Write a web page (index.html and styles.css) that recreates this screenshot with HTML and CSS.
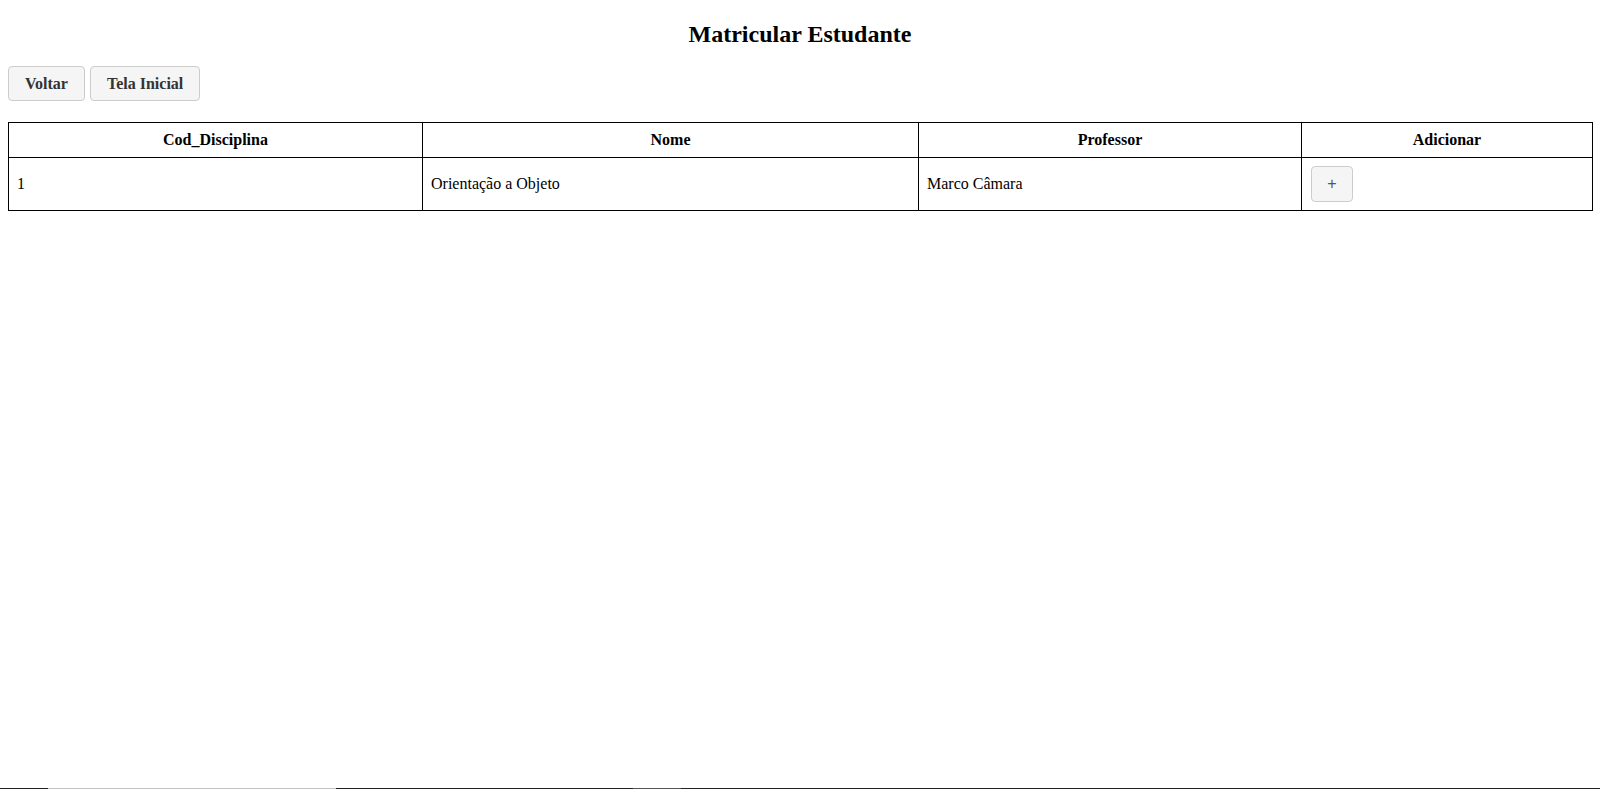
FILE: index.html
```html
<!DOCTYPE html>
<html lang="pt-BR">
<head>
<meta charset="utf-8">
<title>Matricular Estudante</title>
<link rel="stylesheet" href="styles.css">
</head>
<body>
  <h2 class="title">Matricular Estudante</h2>
  <div class="actions">
    <button class="btn">Voltar</button>
    <button class="btn">Tela Inicial</button>
  </div>
  <table class="grid">
    <colgroup>
      <col class="c1"><col class="c2"><col class="c3"><col class="c4">
    </colgroup>
    <thead>
      <tr>
        <th>Cod_Disciplina</th>
        <th>Nome</th>
        <th>Professor</th>
        <th>Adicionar</th>
      </tr>
    </thead>
    <tbody>
      <tr>
        <td>1</td>
        <td>Orientação a Objeto</td>
        <td>Marco Câmara</td>
        <td><button class="add">+</button></td>
      </tr>
    </tbody>
  </table>
  <div class="edge">
    <span class="seg dark s1"></span><span class="seg light s2"></span><span class="seg dark s3"></span><span class="seg mid s4"></span><span class="seg dark s5"></span>
  </div>
</body>
</html>
```

FILE: styles.css
```css
html, body {
  margin: 0;
  padding: 0;
  background: #fff;
}
body {
  padding: 0 8px;
  font-family: "Liberation Serif", "Times New Roman", serif;
  font-size: 16px;
  color: #000;
}
.title {
  margin: 0;
  padding-top: 20px;
  margin-bottom: 18px;
  font-size: 24px;
  line-height: 28px;
  font-weight: bold;
  text-align: center;
}
.actions {
  display: flex;
  gap: 5px;
  height: 35px;
}
.btn {
  font-family: "Liberation Serif", "Times New Roman", serif;
  font-size: 16px;
  font-weight: bold;
  color: #333;
  background: #f5f5f5;
  border: 1px solid #ccc;
  border-radius: 4px;
  padding: 0 16px;
  height: 35px;
  line-height: 33px;
  margin: 0;
}
.grid {
  margin-top: 21px;
  width: 100%;
  border-collapse: collapse;
  table-layout: fixed;
}
.c1 { width: 414px; }
.c2 { width: 496px; }
.c3 { width: 383px; }
.c4 { width: 291px; }
.grid th, .grid td {
  border: 1px solid #000;
  padding: 8px;
  line-height: 18px;
}
.grid th {
  font-weight: bold;
  text-align: center;
}
.grid td {
  text-align: left;
  height: 36px;
}
.add {
  display: block;
  width: 42px;
  height: 36px;
  margin: 0 0 0 1px;
  padding: 0;
  background: #f5f5f5;
  border: 1px solid #ccc;
  border-radius: 4px;
  color: #555;
  font-family: "Liberation Sans", Arial, sans-serif;
  font-size: 16px;
  line-height: 34px;
  text-align: center;
}
.edge {
  position: fixed;
  left: 0;
  right: 0;
  bottom: 0;
  height: 1px;
  display: flex;
}
.seg { display: block; height: 1px; }
.dark { background: #222; }
.light { background: #c2c2c2; }
.mid { background: #555; }
.s1 { width: 48px; }
.s2 { width: 288px; }
.s3 { width: 297px; }
.s4 { width: 48px; }
.s5 { flex: 1; }
```
